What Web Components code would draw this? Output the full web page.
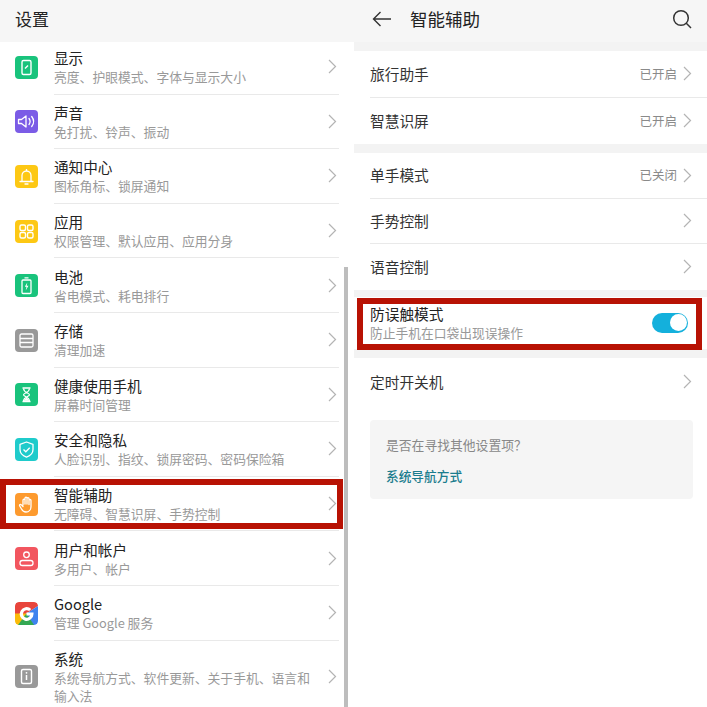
<!DOCTYPE html>
<html lang="zh">
<head>
<meta charset="utf-8">
<title>设置</title>
<style>
    html, body { margin: 0; height: 707px; overflow: hidden; background: #fff; }
    body { font-family: "Noto Sans CJK SC", "Noto Sans", sans-serif; }
</style>
</head>
<body>
<settings-split>
    <settings-pane slot="left">
        <top-bar slot="bar" heading="设置"></top-bar>
        <settings-row heading="显示" sub="亮度、护眼模式、字体与显示大小" color="#19c37c" icon="display"></settings-row>
        <settings-row heading="声音" sub="免打扰、铃声、振动" color="#7b5ce6" icon="sound"></settings-row>
        <settings-row heading="通知中心" sub="图标角标、锁屏通知" color="#fdc814" icon="bell"></settings-row>
        <settings-row heading="应用" sub="权限管理、默认应用、应用分身" color="#fdc814" icon="apps"></settings-row>
        <settings-row heading="电池" sub="省电模式、耗电排行" color="#19c37c" icon="battery"></settings-row>
        <settings-row heading="存储" sub="清理加速" color="#999999" icon="storage"></settings-row>
        <settings-row heading="健康使用手机" sub="屏幕时间管理" color="#19c37c" icon="hourglass"></settings-row>
        <settings-row heading="安全和隐私" sub="人脸识别、指纹、锁屏密码、密码保险箱" color="#1fcbcb" icon="shield"></settings-row>
        <settings-row heading="智能辅助" sub="无障碍、智慧识屏、手势控制" color="#fd9a2e" icon="hand"></settings-row>
        <settings-row heading="用户和帐户" sub="多用户、帐户" color="#f2565f" icon="user"></settings-row>
        <settings-row heading="Google" sub="管理 Google 服务" color="#fff" icon="google"></settings-row>
        <settings-row tall last heading="系统" sub="系统导航方式、软件更新、关于手机、语言和输入法" color="#999999" icon="system"></settings-row>
    </settings-pane>

    <settings-pane slot="right">
        <top-bar slot="bar" heading="智能辅助" back></top-bar>
        <option-group gap="9" row="46.500">
            <option-row heading="旅行助手" value="已开启"></option-row>
            <option-row heading="智慧识屏" value="已开启" last></option-row>
        </option-group>
        <option-group gap="9" row="45.500">
            <option-row heading="单手模式" value="已关闭"></option-row>
            <option-row heading="手势控制"></option-row>
            <option-row heading="语音控制" last></option-row>
        </option-group>
        <option-group gap="7" row="52.500">
            <switch-row heading="防误触模式" sub="防止手机在口袋出现误操作"></switch-row>
        </option-group>
        <option-group gap="9" row="47">
            <option-row heading="定时开关机" last></option-row>
        </option-group>
        <hint-card question="是否在寻找其他设置项？" link="系统导航方式"></hint-card>
    </settings-pane>
</settings-split>

<script>
const CHEVRON = `<svg width="9" height="15" viewBox="0 0 9 15" fill="none" stroke="#b4b4b4" stroke-width="1.2"><path d="M1 1l6.500 6.500L1 14"/></svg>`;

const ICONS = {
    display: `<rect x="7" y="4.500" width="9" height="14" rx="1.500" fill="none" stroke="#fff" stroke-width="1.400"/><path d="M10 12.500l3-3" stroke="#fff" stroke-width="1.400"/>`,
    sound: `<path d="M3.500 9.500h3l4.500-3.500v11L6.500 13.500h-3z" fill="none" stroke="#fff" stroke-width="1.300" stroke-linejoin="round"/><path d="M14 8.500c1.400 1.900 1.400 4.100 0 6M16.700 6.500c2.400 3.100 2.400 6.900 0 10" fill="none" stroke="#fff" stroke-width="1.300" stroke-linecap="round"/>`,
    bell: `<path d="M5 16.500h13M7 16.500v-6a4.500 4.500 0 0 1 9 0v6" fill="none" stroke="#fff" stroke-width="1.300" stroke-linecap="round"/><path d="M10 19h3" stroke="#fff" stroke-width="1.300" stroke-linecap="round"/><path d="M11.500 4v2" stroke="#fff" stroke-width="1.300"/>`,
    apps: `<g fill="none" stroke="#fff" stroke-width="1.400"><rect x="5" y="5" width="5.500" height="5.500" rx="1.500"/><rect x="12.500" y="5" width="5.500" height="5.500" rx="1.500"/><rect x="5" y="12.500" width="5.500" height="5.500" rx="1.500"/><rect x="12.500" y="12.500" width="5.500" height="5.500" rx="1.500"/></g>`,
    battery: `<rect x="7" y="6" width="9" height="13.500" rx="1" fill="none" stroke="#fff" stroke-width="1.300"/><path d="M9.500 3.800h4" stroke="#fff" stroke-width="1.300"/><path d="M12.300 8.500l-2.500 4.300h1.700l-.8 3.700 2.800-4.700h-1.800z" fill="#fff"/>`,
    storage: `<g fill="none" stroke="#fff" stroke-width="1.300"><rect x="5" y="5" width="13" height="13" rx="1.500"/><path d="M5 9.500h13M5 13.500h13"/></g>`,
    hourglass: `<path d="M7.500 5h8M7.500 18.500h8" stroke="#fff" stroke-width="1.400"/><path d="M8.500 5.500c0 4 5.900 4.500 6 6.200.100 1.800-6 2.300-6 6.300h6c0-4-6-4.500-6-6.300 0-1.700 6-2.200 6-6.200" fill="none" stroke="#fff" stroke-width="1.200"/><path d="M9 17.800c.4-1.800 2.500-3 2.500-3s2.100 1.200 2.500 3z" fill="#fff"/>`,
    shield: `<path d="M11.500 4l6.500 2.300v5.200c0 3.700-2.700 6.300-6.500 7.700-3.800-1.400-6.500-4-6.500-7.700V6.300z" fill="none" stroke="#fff" stroke-width="1.300" stroke-linejoin="round"/><path d="M8.500 11.500l2.300 2.300 3.900-4" fill="none" stroke="#fff" stroke-width="1.300"/>`,
    hand: `<path d="M8 12V7.200a1 1 0 0 1 2 0V11M10 11V5.200a1 1 0 0 1 2 0V11M12 11V5.700a1 1 0 0 1 2 0V11.500M14 11.500V7.500a1 1 0 0 1 2 0v6c0 3-2 5.500-5 5.500-2.500 0-3.600-1.300-4.500-3L4.700 13c-.6-1.200.9-2 1.700-1.100L8 13.500" fill="none" stroke="#fff" stroke-width="1.300" stroke-linecap="round" stroke-linejoin="round"/>`,
    user: `<circle cx="11.500" cy="7.800" r="2.800" fill="none" stroke="#fff" stroke-width="1.300"/><rect x="5" y="13.500" width="13" height="5" rx="2.300" fill="none" stroke="#fff" stroke-width="1.300"/>`,
    google: `<path d="M0 4a4 4 0 0 1 4-4h15a4 4 0 0 1 4 4L11.500 11.500 0 16z" fill="#e8453c"/><path d="M23 4v15a4 4 0 0 1-4 4h-4L11.500 11.500z" fill="#3f83ee"/><path d="M0 11.500V19a4 4 0 0 0 4 4h11.500L11.500 11.500z" fill="#fbbb08"/><path d="M4 23h15l-7.500-11.500L3 23z" fill="#34a853"/><path d="M18.500 10.400h-7v3h3.600a3.700 3.700 0 1 1-1-4.300l2.200-2.200a6.900 6.900 0 1 0 2.200 5z" fill="#fff"/>`,
    system: `<rect x="6.500" y="4.500" width="10" height="14" rx="1.500" fill="none" stroke="#fff" stroke-width="1.400"/><path d="M11.500 10v5" stroke="#fff" stroke-width="1.500"/><circle cx="11.500" cy="7.800" r=".9" fill="#fff"/>`
};

class SettingsSplit extends HTMLElement {
    constructor() {
        super();
        this.attachShadow({mode: 'open'});
        this.shadowRoot.innerHTML = `
            <style>
                :host { display: grid; grid-template-columns: 354px 353px; height: 707px; position: relative; overflow: hidden; }
                .mark { position: absolute; box-sizing: border-box; border: 6px solid #b81204; }
                .mark.a { left: 0; top: 479px; width: 343px; height: 50px; }
                .mark.b { left: 357px; top: 298px; width: 345px; height: 52px; }
                .scroll { position: absolute; left: 344px; top: 267px; width: 4px; height: 440px; background: #bdbdbd; }
            </style>
            <slot name="left"></slot>
            <slot name="right"></slot>
            <div class="scroll"></div>
            <div class="mark a"></div>
            <div class="mark b"></div>`;
    }
}

class SettingsPane extends HTMLElement {
    constructor() {
        super();
        this.attachShadow({mode: 'open'});
        this.shadowRoot.innerHTML = `
            <style>
                :host { display: flex; flex-direction: column; height: 707px; overflow: hidden; background: #fff; }
            </style>
            <slot name="bar"></slot>
            <slot></slot>`;
    }
}

class TopBar extends HTMLElement {
    constructor() {
        super();
        this.attachShadow({mode: 'open'});
    }

    connectedCallback() {
        const back = this.hasAttribute('back');
        this.shadowRoot.innerHTML = `
            <style>
                :host { display: flex; align-items: center; flex: none; height: 42px; background: #f6f6f6; color: #222;
                    position: relative; z-index: 1; box-sizing: border-box; padding: 0 15px 4px ${back ? 18 : 15}px; }
                h1 { margin: 0; font-size: ${back ? 17.500 : 17}px; font-weight: 400; line-height: 24px; flex: 1; }
                svg { display: block; flex: none; }
                .arrow { margin-right: 19px; }
            </style>
            ${back ? `<svg class="arrow" width="19" height="16" viewBox="0 0 19 16" fill="none" stroke="#333" stroke-width="1.400"><path d="M8.500 1L1.500 8l7 7M1.500 8H19"/></svg>` : ''}
            <h1>${this.getAttribute('heading')}</h1>
            ${back ? `<svg width="20" height="20" viewBox="0 0 20 20" fill="none" stroke="#333" stroke-width="1.500"><circle cx="9" cy="9" r="7.300"/><path d="M14.300 14.300l4.700 4.700"/></svg>` : ''}`;
    }
}

class SettingsRow extends HTMLElement {
    constructor() {
        super();
        this.attachShadow({mode: 'open'});
    }

    connectedCallback() {
        const icon = this.getAttribute('icon');
        const tall = this.hasAttribute('tall');
        this.shadowRoot.innerHTML = `
            <style>
                :host { display: flex; align-items: center; height: ${tall ? 72 : 54.600}px; flex: none; box-sizing: border-box; padding-left: 15px; }
                :host(:first-of-type) { margin-top: -2px; }
                .icon { flex: none; width: 23px; height: 23px; border-radius: 4px; background: ${this.getAttribute('color')}; margin-right: 16px; overflow: hidden; }
                .icon svg { display: block; }
                .body { flex: none; width: 285px; height: 100%; box-sizing: border-box; padding-right: 15px; display: flex; align-items: center;
                    border-bottom: ${this.hasAttribute('last') ? 0 : 1}px solid #e9e9e9; }
                .text { flex: 1; min-width: 0; padding-top: 2px; }
                .title { font-size: 14.600px; line-height: 18px; color: #222; }
                .sub { font-size: 12.800px; line-height: 18px; margin-top: 1px; color: #999; }
                .chev { flex: none; margin-left: 17px; margin-right: -13px; }
                .chev svg { display: block; }
            </style>
            <div class="icon"><svg width="23" height="23" viewBox="0 0 23 23">${ICONS[icon]}</svg></div>
            <div class="body">
                <div class="text">
                    <div class="title">${this.getAttribute('heading')}</div>
                    <div class="sub">${this.getAttribute('sub')}</div>
                </div>
                <div class="chev">${CHEVRON}</div>
            </div>`;
    }
}

class OptionGroup extends HTMLElement {
    constructor() {
        super();
        this.attachShadow({mode: 'open'});
    }

    connectedCallback() {
        this.shadowRoot.innerHTML = `
            <style>
                :host { display: block; flex: none; background: #fff; border-top: ${this.getAttribute('gap')}px solid #f3f3f3;
                    --row-height: ${this.getAttribute('row')}px; }
            </style>
            <slot></slot>`;
    }
}

class OptionRow extends HTMLElement {
    constructor() {
        super();
        this.attachShadow({mode: 'open'});
    }

    connectedCallback() {
        const value = this.getAttribute('value');
        this.shadowRoot.innerHTML = `
            <style>
                :host { display: block; height: var(--row-height); margin-left: 16px; }
                .row { display: flex; align-items: center; height: 100%; box-sizing: border-box; padding-right: 15px;
                    border-bottom: ${this.hasAttribute('last') ? 0 : 1}px solid #e9e9e9; }
                .title { flex: 1; font-size: 14.700px; line-height: 20px; color: #333; }
                .value { font-size: 12.500px; color: #8a8a8a; margin-right: 6px; line-height: 18px; }
                svg { display: block; }
            </style>
            <div class="row">
                <div class="title">${this.getAttribute('heading')}</div>
                ${value ? `<div class="value">${value}</div>` : ''}
                ${CHEVRON}
            </div>`;
    }
}

class SwitchRow extends HTMLElement {
    constructor() {
        super();
        this.attachShadow({mode: 'open'});
    }

    connectedCallback() {
        this.shadowRoot.innerHTML = `
            <style>
                :host { display: flex; align-items: center; height: var(--row-height); box-sizing: border-box; padding: 0 19px 0 16px; }
                .text { flex: 1; padding-top: 2px; }
                .title { font-size: 14.700px; line-height: 18px; color: #222; }
                .sub { font-size: 12.750px; line-height: 18px; margin-top: 1px; color: #999; }
                .toggle { flex: none; width: 36px; height: 20px; border-radius: 10px; background: #14b0dc; position: relative; }
                .toggle::after { content: ""; position: absolute; right: 1.500px; top: 1.500px; width: 17px; height: 17px; border-radius: 50%; background: #fff; }
            </style>
            <div class="text">
                <div class="title">${this.getAttribute('heading')}</div>
                <div class="sub">${this.getAttribute('sub')}</div>
            </div>
            <div class="toggle"></div>`;
    }
}

class HintCard extends HTMLElement {
    constructor() {
        super();
        this.attachShadow({mode: 'open'});
    }

    connectedCallback() {
        this.shadowRoot.innerHTML = `
            <style>
                :host { display: block; flex: none; margin: 15px 14px 0 16px; height: 79px; box-sizing: border-box; padding: 16px 16px 0;
                    background: #f5f5f5; border-radius: 4px; }
                .q { font-size: 12.800px; line-height: 18px; color: #888; }
                .link { font-size: 12.700px; line-height: 18px; color: #1b7d8e; font-weight: 500; margin-top: 13px; }
            </style>
            <div class="q">${this.getAttribute('question')}</div>
            <div class="link">${this.getAttribute('link')}</div>`;
    }
}

customElements.define('settings-split', SettingsSplit);
customElements.define('settings-pane', SettingsPane);
customElements.define('top-bar', TopBar);
customElements.define('settings-row', SettingsRow);
customElements.define('option-group', OptionGroup);
customElements.define('option-row', OptionRow);
customElements.define('switch-row', SwitchRow);
customElements.define('hint-card', HintCard);
</script>
</body>
</html>
